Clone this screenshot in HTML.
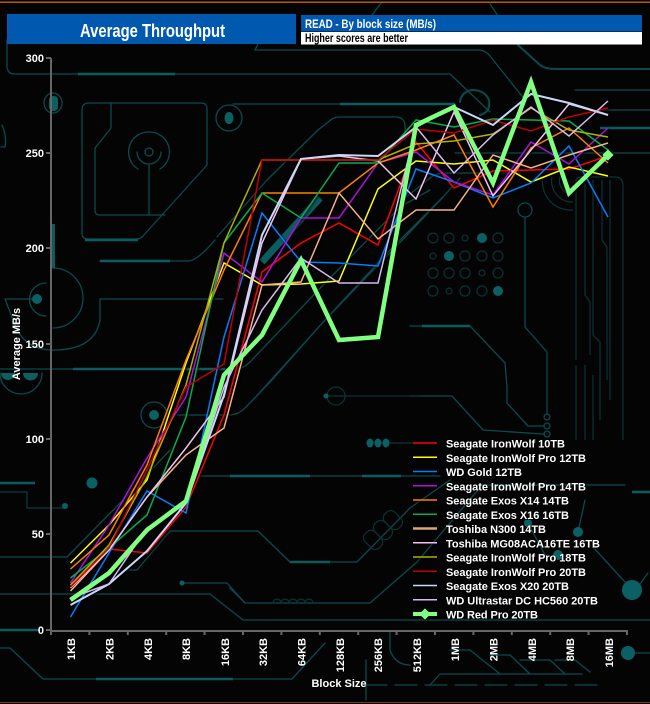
<!DOCTYPE html>
<html><head><meta charset="utf-8"><style>
html,body{margin:0;padding:0;background:#040404;width:650px;height:704px;overflow:hidden}
svg{display:block}
text{font-family:"Liberation Sans",sans-serif;fill:#fff;font-weight:bold;font-size:11px}
</style></head><body>
<svg width="650" height="704" viewBox="0 0 650 704" xmlns="http://www.w3.org/2000/svg">
<rect width="650" height="704" fill="#040404"/>
<g fill="none" stroke="#0b4a4d" stroke-width="1.3" stroke-linecap="round" stroke-linejoin="round">
<path d="M7 40V67Q8 74 14 74H450L490 112"/>
<path d="M258 44L255 50H480Q486 51 490 56L525 100"/>
<path d="M381 3L372 15M490 4L498 16"/>
<path d="M518 45L540 65Q545 69 555 69H650" stroke-width="2"/>
<path d="M82 110Q82 103 89 103H201Q207 103 207 109V165L143 236Q141 239 136 239H88Q82 239 82 233Z"/>
<path d="M111 103V128L95 148V210Q95 215 100 215H165"/>
<path d="M149 132A20 20 0 0 1 160 169M138 169A20 20 0 0 1 149 132M137 152A12 12 0 0 0 161 152"/>
<circle cx="149" cy="152" r="4"/><path d="M149 165V215"/>
<ellipse cx="53" cy="103" rx="9" ry="10"/>
<path d="M2 125Q7 137 5 147H1"/>
<circle cx="229" cy="118" r="13"/>
<path d="M233 104H455"/>
<path d="M480 115Q491 112 489 100Q485 90 472 90Q461 92 460 102" stroke-width="2"/>
<path d="M318 130L332 119Q335 117 340 117H397Q405 118 405 126V140"/>
<path d="M318 130L267 180L217 237"/>
<path d="M100 299V320Q95 350 53 350Q25 350 15 325L5 299H33"/>
<path d="M53 268A30 30 0 0 1 53 328M46 283A15 15 0 0 0 46 316"/>
<path d="M100 299H223"/>
<path d="M100 261H190Q200 258 215 240"/>
<path d="M177 415H230Q240 414 245 408L272 380L325 320L390 250L443 197L460 178"/>
<path d="M0 369H235Q243 369 250 362L325 283L400 207L430 190"/>
<path d="M253 400L325 320L410 232L443 197"/>
<path d="M0 373A20 20 0 0 0 42 373"/>
<circle cx="154" cy="415" r="13"/>
<path d="M0 492H27V508H65" stroke="#0a3a3c"/>
<path d="M200 476H440"/>
<path d="M0 557H67L123 500L170 450"/>
<path d="M127 570H137L170 531H258L290 562H357L410 508L450 480"/>
<path d="M0 594H210L243 620H650"/>
<path d="M182 583H227L245 603H370L417 562L482 485H625"/>
<path d="M230 588L245 603"/>
<path d="M0 648H10L43 679H292L325 643"/>
<path d="M365 685H600" stroke-dasharray="22 8"/>
<path d="M440 674L450 674H582M440 674L430 685M450 650H470L500 674M490 655H510L530 674M520 660H550L565 674M555 660H575L590 672"/>
<path d="M390 632V650Q395 665 410 665M366 660Q366 685 366 700"/>
<path d="M593 547L625 582M648 573L640 584M528 523L545 555M578 532L585 500"/>
<path d="M635 653H650"/>
<path d="M600 110H650M575 90H650M455 153H650M400 202L430 178Q436 173 445 173H520"/>
<path d="M525 217V327L547 352V413"/>
<circle cx="525" cy="210" r="7"/>
<path d="M410 326H470L505 363L507 387V403L528 426H543"/>
<path d="M410 396H452L483 430L543 434"/>
<circle cx="547" cy="417" r="3"/><circle cx="547" cy="426" r="3"/><circle cx="547" cy="434" r="3"/>
</g>
<g fill="none" stroke="#0a3335" stroke-width="1.2">
<path d="M576 180Q577 177 580 177H615Q623 177 623 186V440M576 180V360M585 180V295L590 302V355M593 180V335L600 342V420M602 180V240L607 247V380M610 180V400M576 365V440M585 365V440M593 375V440"/>
<path d="M543 177A28 28 0 0 0 573 210M552 177A21 21 0 0 0 573 202M560 177A13 13 0 0 0 573 194"/>
<circle cx="336" cy="396" r="9"/><path d="M326 396H420M367 443H413"/>
<circle cx="433" cy="238" r="5"/><circle cx="449" cy="238" r="5"/><circle cx="465" cy="238" r="3"/><circle cx="498" cy="238" r="5"/>
<circle cx="433" cy="256" r="3"/><circle cx="465" cy="256" r="5"/><circle cx="482" cy="256" r="5"/><circle cx="498" cy="256" r="5"/>
<circle cx="433" cy="273" r="5"/><circle cx="449" cy="273" r="5"/><circle cx="465" cy="273" r="5"/><circle cx="482" cy="273" r="3"/><circle cx="498" cy="273" r="5"/>
<circle cx="433" cy="291" r="5"/><circle cx="449" cy="291" r="3"/><circle cx="465" cy="291" r="5"/><circle cx="482" cy="291" r="5"/>
<g transform="rotate(-45 383 530)"><rect x="362" y="520" width="14" height="20" rx="6"/><rect x="376" y="520" width="14" height="20" rx="6"/><rect x="390" y="520" width="14" height="20" rx="6"/></g>
<path d="M273 603a4 4 0 0 1 8 0a4 4 0 0 1 8 0a4 4 0 0 1 8 0a4 4 0 0 1 8 0a4 4 0 0 1 8 0"/>
</g>
<g fill="none" stroke="#0b5c60" stroke-width="2.6">
<path d="M73 369H225M100 261H170M85 240H138M0 483H35M0 630H40M96 679H233M340 104H455M600 128H650M632 492H650M230 476H310M362 476H401M422 326H470M290 562H330M78 74H175"/>
<path d="M320 198L262 262" stroke-width="7"/>
<path d="M53 224V268" stroke-width="4"/>
</g>
<g fill="#0b6064">
<rect x="49" y="96" width="9" height="15" rx="4"/>
<ellipse cx="229" cy="118" rx="4.500" ry="6"/>
<circle cx="37" cy="299" r="5"/>
<path d="M1 373H15A7 7 0 0 1 1 373ZM23 373H38A7 7 0 0 1 23 373Z"/>
<circle cx="154" cy="415" r="5"/>
<circle cx="92" cy="483" r="5.500"/>
<circle cx="65" cy="506" r="3"/>
<circle cx="182" cy="583" r="2.500"/>
<circle cx="632" cy="590" r="10"/>
<circle cx="578" cy="532" r="5"/>
<circle cx="528" cy="523" r="4"/>
<circle cx="558" cy="555" r="5"/>
<circle cx="628" cy="653" r="7"/>
<circle cx="482" cy="238" r="5"/><circle cx="449" cy="256" r="5"/><circle cx="498" cy="291" r="5"/>
<circle cx="326" cy="396" r="2.500"/>
<ellipse cx="370" cy="443" rx="3.500" ry="4.500"/><ellipse cx="378" cy="443" rx="3.500" ry="4.500"/><ellipse cx="386" cy="443" rx="3.500" ry="4.500"/>
</g>
<rect x="0" y="1.500" width="650" height="1.500" fill="#b85c00"/>
<rect x="0" y="702" width="650" height="1" fill="#7a3e00"/>
<rect x="7" y="14" width="289" height="30" fill="#0059ae"/>
<rect x="301" y="15" width="341" height="16.500" fill="#0059ae"/>
<rect x="301" y="32" width="341" height="12.500" fill="#fff"/>
<text x="80" y="37" style="font-size:18px" textLength="145" lengthAdjust="spacingAndGlyphs">Average Throughput</text>
<text x="305" y="28" style="font-size:11.500px" textLength="131" lengthAdjust="spacingAndGlyphs">READ - By block size (MB/s)</text>
<text x="305" y="42" style="font-size:11.500px;fill:#000" textLength="103" lengthAdjust="spacingAndGlyphs">Higher scores are better</text>
<g fill="none" stroke="#666" stroke-width="2">
<path d="M51 58V631H627"/>
<path d="M46 58H51M46 153H51M46 248H51M46 344H51M46 439H51M46 534H51M46 630H51"/>
<path d="M51 630V635M89.400 630V635M127.800 630V635M166.200 630V635M204.600 630V635M243 630V635M281.400 630V635M319.800 630V635M358.200 630V635M396.600 630V635M435 630V635M473.400 630V635M511.800 630V635M550.200 630V635M588.600 630V635M627 630V635"/>
</g>
<g style="text-anchor:end">
<text x="44" y="62">300</text><text x="44" y="157">250</text><text x="44" y="252">200</text><text x="44" y="348">150</text><text x="44" y="443">100</text><text x="44" y="538">50</text><text x="44" y="634">0</text>
</g>
<g style="text-anchor:end">
<text transform="translate(75 638) rotate(-90)">1KB</text>
<text transform="translate(113.500 638) rotate(-90)">2KB</text>
<text transform="translate(152 638) rotate(-90)">4KB</text>
<text transform="translate(190 638) rotate(-90)">8KB</text>
<text transform="translate(229 638) rotate(-90)">16KB</text>
<text transform="translate(267 638) rotate(-90)">32KB</text>
<text transform="translate(305.500 638) rotate(-90)">64KB</text>
<text transform="translate(344 638) rotate(-90)">128KB</text>
<text transform="translate(382 638) rotate(-90)">256KB</text>
<text transform="translate(421 638) rotate(-90)">512KB</text>
<text transform="translate(459 638) rotate(-90)">1MB</text>
<text transform="translate(497.500 638) rotate(-90)">2MB</text>
<text transform="translate(536 638) rotate(-90)">4MB</text>
<text transform="translate(574 638) rotate(-90)">8MB</text>
<text transform="translate(613 638) rotate(-90)">16MB</text>
</g>
<text x="339" y="687" style="text-anchor:middle">Block Size</text>
<text transform="translate(20 344) rotate(-90)" style="text-anchor:middle">Average MB/s</text>
<g fill="none" stroke-width="1.500" stroke-linejoin="miter" style="filter:drop-shadow(1px 1px 1px #000)">
<polyline stroke="#ff0000" points="70.500,585 109,549 147,553 186,507 224,415 262,272 301,243 339,223 378,245 416,142 454,188 493,171 531,170 569,169 608,156"/>
<polyline stroke="#ffff00" points="70.500,563 109,525 147,480 186,363 224,263 262,285 301,284 339,281 378,189 416,161 454,164 493,160 531,182 569,167 608,176"/>
<polyline stroke="#0080ff" points="70.500,617 109,553 147,491 186,513 224,337 262,213 301,262 339,263 378,266 416,169 454,182 493,198 531,183 569,146 608,217"/>
<polyline stroke="#b010e0" points="70.500,583 109,525 147,458 186,397 224,253 262,282 301,218 339,218 378,163 416,152 454,182 493,195 531,142 569,164 608,128"/>
<polyline stroke="#ff8000" points="70.500,569 109,535 147,465 186,360 224,270 262,193 301,193 339,193 378,163 416,150 454,135 493,207 531,148 569,128 608,163"/>
<polyline stroke="#00b050" points="70.500,578 109,548 147,515 186,417 224,243 262,193 301,218 339,163 378,163 416,120 454,127 493,119 531,120 569,121 608,150"/>
<polyline stroke="#f4b183" points="70.500,591 109,550 147,497 186,455 224,428 262,285 301,282 339,193 378,239 416,210 454,210 493,155 531,168 569,155 608,143"/>
<polyline stroke="#f0c0f0" points="70.500,588 109,550 147,497 186,448 224,397 262,243 301,159 339,156 378,161 416,199 454,112 493,196 531,150 569,104 608,115"/>
<polyline stroke="#b0b000" points="70.500,585 109,545 147,477 186,385 224,243 262,160 301,160 339,160 378,160 416,144 454,141 493,134 531,108 569,130 608,137"/>
<polyline stroke="#c00000" points="70.500,587 109,548 147,470 186,387 224,364 262,160 301,160 339,160 378,160 416,129 454,133 493,120 531,131 569,117 608,108"/>
<polyline stroke="#c8d8f8" points="70.500,605 109,584 147,551 186,503 224,395 262,235 301,159 339,155 378,156 416,127 454,107 493,125 531,94 569,103 608,115" stroke-width="2"/>
<polyline stroke="#d8b8f0" points="70.500,598 109,584 147,528 186,502 224,387 262,310 301,258 339,283 378,283 416,127 454,173 493,135 531,107 569,136 608,101"/>
<polyline stroke="#80ff80" stroke-width="4.500" points="70.500,600 109,573 147,530 186,501 224,375 262,335 301,260 339,340 378,337 416,125 454,107 493,183 531,82 569,193 608,155"/>
<rect x="604" y="151" width="8" height="8" fill="#80ff80" transform="rotate(45 608 155)" stroke="none"/>
</g>
<g fill="none" stroke-width="1.500" style="filter:drop-shadow(1px 1px 1px #000)">
<path stroke="#ff0000" d="M413 443H437"/>
<path stroke="#ffff00" d="M413 457.300H437"/>
<path stroke="#0080ff" d="M413 471.500H437"/>
<path stroke="#b010e0" d="M413 485.800H437"/>
<path stroke="#ff8000" d="M413 500H437"/>
<path stroke="#00b050" d="M413 514.300H437"/>
<path stroke="#d8a878" stroke-width="2.500" d="M413 528.500H437"/>
<path stroke="#f0c0f0" d="M413 542.800H437"/>
<path stroke="#b0b000" d="M413 557H437"/>
<path stroke="#c00000" d="M413 571.300H437"/>
<path stroke="#c8d8f8" d="M413 585.500H437"/>
<path stroke="#d8b8f0" d="M413 599.800H437"/>
<path stroke="#80ff80" stroke-width="4" d="M413 614H437"/>
<rect x="421" y="610" width="8" height="8" fill="#80ff80" stroke="none" transform="rotate(45 425 614)"/>
</g>
<g style="filter:drop-shadow(1px 1px 0 #000)">
<text x="446" y="447.500" textLength="119" lengthAdjust="spacing">Seagate IronWolf 10TB</text>
<text x="446" y="461.800" textLength="140" lengthAdjust="spacing">Seagate IronWolf Pro 12TB</text>
<text x="446" y="476" textLength="76" lengthAdjust="spacing">WD Gold 12TB</text>
<text x="446" y="490.300" textLength="140" lengthAdjust="spacing">Seagate IronWolf Pro 14TB</text>
<text x="446" y="504.500" textLength="123" lengthAdjust="spacing">Seagate Exos X14 14TB</text>
<text x="446" y="518.800" textLength="123" lengthAdjust="spacing">Seagate Exos X16 16TB</text>
<text x="446" y="533" textLength="100" lengthAdjust="spacing">Toshiba N300 14TB</text>
<text x="446" y="547.300" textLength="154" lengthAdjust="spacing">Toshiba MG08ACA16TE 16TB</text>
<text x="446" y="561.500" textLength="140" lengthAdjust="spacing">Seagate IronWolf Pro 18TB</text>
<text x="446" y="575.800" textLength="140" lengthAdjust="spacing">Seagate IronWolf Pro 20TB</text>
<text x="446" y="590" textLength="123" lengthAdjust="spacing">Seagate Exos X20 20TB</text>
<text x="446" y="604.300" textLength="152" lengthAdjust="spacing">WD Ultrastar DC HC560 20TB</text>
<text x="446" y="618.500" textLength="92" lengthAdjust="spacing">WD Red Pro 20TB</text>
</g>
</svg>
</body></html>
